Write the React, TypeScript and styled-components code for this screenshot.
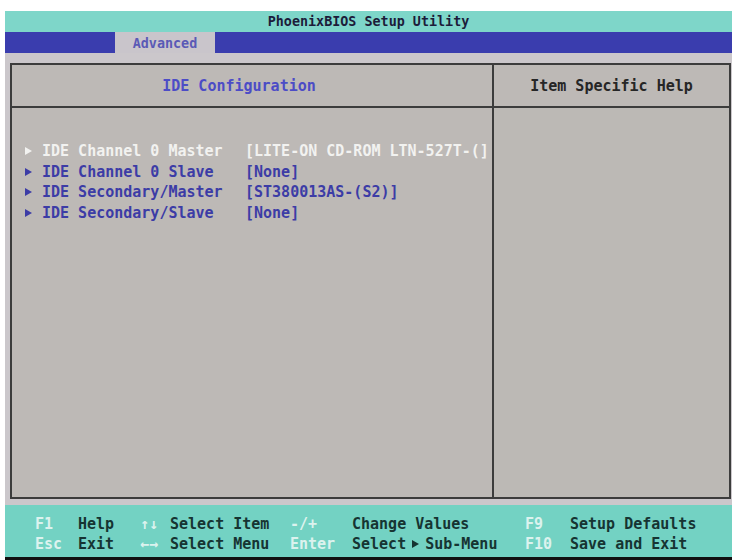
import React from 'react'
import styled, { createGlobalStyle } from 'styled-components'

const GlobalStyle = createGlobalStyle`
  html, body {
    margin: 0;
    padding: 0;
    background: #ffffff;
  }
  body {
    font-family: "DejaVu Sans Mono", "Liberation Mono", monospace;
    font-weight: bold;
  }
`

const Screen = styled.div`
  width: 727px;
  margin: 11px 5px 0 5px;
  display: flex;
  flex-direction: column;
`

const TitleBar = styled.div`
  height: 21px;
  background-color: #7ed6c9;
  color: #1c1c3a;
  font-size: 13.4px;
  line-height: 21px;
  text-align: center;
`

const MenuBar = styled.div`
  height: 21px;
  display: flex;
  background-color: #3a3dae;
`

const Tab = styled.div`
  margin-left: 110px;
  width: 100px;
  height: 21px;
  padding-top: 1px;
  background-color: #c9c5cb;
  color: #5a5ab6;
  font-size: 13.4px;
  line-height: 21px;
  text-align: center;
`

const Body = styled.div`
  background-color: #cbc7cb;
  padding: 10px 1px 6px 5px;
`

const Panel = styled.div`
  height: 432px;
  border: 2px solid #3c3c3c;
  background-color: #bdb9b6;
  display: grid;
  grid-template-columns: 482px 1fr;
  grid-template-rows: 43px 1fr;
`

const Header = styled.div<{ $left?: boolean; $blue?: boolean }>`
  display: flex;
  align-items: center;
  justify-content: center;
  font-size: 15px;
  color: ${p => (p.$blue ? '#4c4cc6' : '#262626')};
  border-bottom: 2px solid #3c3c3c;
  border-right: ${p => (p.$left ? '2px solid #3c3c3c' : 'none')};
  padding-right: ${p => (p.$left ? '26px' : '0')};
`

const ItemList = styled.div`
  padding-top: 33px;
  border-right: 2px solid #3c3c3c;
  display: flex;
  flex-direction: column;
`

const HelpArea = styled.div`
  background-color: #bcb9b5;
`

const Item = styled.div<{ $active?: boolean }>`
  display: flex;
  align-items: center;
  height: 20.5px;
  padding-left: 13px;
  font-size: 15px;
  white-space: nowrap;
  overflow: hidden;
  color: ${p => (p.$active ? '#f2f2f0' : '#3c3ca6')};
`

const Arrow = styled.span<{ $color?: string }>`
  display: inline-block;
  width: 0;
  height: 0;
  border-top: 4px solid transparent;
  border-bottom: 4px solid transparent;
  border-left: 7px solid ${p => p.$color || 'currentColor'};
`

const ArrowSlot = styled.span`
  width: 17px;
  display: flex;
  align-items: center;
`

const Label = styled.span`
  width: 203px;
`

const Value = styled.span``

const Footer = styled.div`
  background-color: #73d2c3;
  padding: 9px 0 3px 30px;
  border-bottom: 5px solid #111111;
  display: grid;
  grid-template-columns: 43px 62px 30px 120px 62px 173px 45px 1fr;
  grid-auto-rows: 20px;
  font-size: 15px;
  line-height: 20px;
`

const Key = styled.span`
  color: #dcf2ee;
  white-space: nowrap;
`

const Desc = styled.span`
  color: #163432;
  white-space: nowrap;
  display: flex;
  align-items: center;
  gap: 6px;
`

const items = [
  { label: 'IDE Channel 0 Master', value: '[LITE-ON CD-ROM LTN-527T-(]', active: true },
  { label: 'IDE Channel 0 Slave', value: '[None]' },
  { label: 'IDE Secondary/Master', value: '[ST380013AS-(S2)]' },
  { label: 'IDE Secondary/Slave', value: '[None]' },
]

const App = () => {
  return (
    <>
      <GlobalStyle />
      <Screen>
        <TitleBar>PhoenixBIOS Setup Utility</TitleBar>
        <MenuBar>
          <Tab>Advanced</Tab>
        </MenuBar>
        <Body>
          <Panel>
            <Header $left $blue>IDE Configuration</Header>
            <Header>Item Specific Help</Header>
            <ItemList>
              {items.map(it => (
                <Item key={it.label} $active={it.active}>
                  <ArrowSlot>
                    <Arrow />
                  </ArrowSlot>
                  <Label>{it.label}</Label>
                  <Value>{it.value}</Value>
                </Item>
              ))}
            </ItemList>
            <HelpArea />
          </Panel>
        </Body>
        <Footer>
          <Key>F1</Key>
          <Desc>Help</Desc>
          <Key>↑↓</Key>
          <Desc>Select Item</Desc>
          <Key>-/+</Key>
          <Desc>Change Values</Desc>
          <Key>F9</Key>
          <Desc>Setup Defaults</Desc>
          <Key>Esc</Key>
          <Desc>Exit</Desc>
          <Key>←→</Key>
          <Desc>Select Menu</Desc>
          <Key>Enter</Key>
          <Desc>
            Select <Arrow $color="#163432" /> Sub-Menu
          </Desc>
          <Key>F10</Key>
          <Desc>Save and Exit</Desc>
        </Footer>
      </Screen>
    </>
  )
}

export default App
